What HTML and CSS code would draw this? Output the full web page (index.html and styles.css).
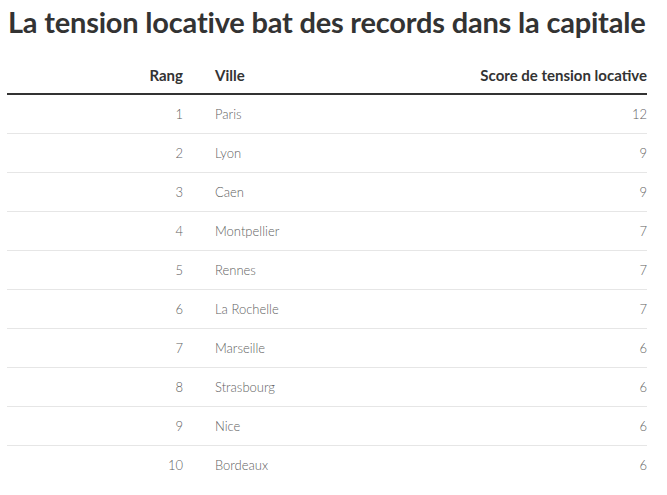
FILE: index.html
```html
<!DOCTYPE html>
<html lang="fr">
<head>
<meta charset="utf-8">
<link rel="stylesheet" href="styles.css">
</head>
<body>
<div class="wrap">
  <h1 class="title">La tension locative bat des records dans la capitale</h1>
  <div class="table">
    <div class="row head">
      <div class="c1">Rang</div><div class="c2">Ville</div><div class="c3">Score de tension locative</div>
    </div>
    <div class="row"><div class="c1">1</div><div class="c2">Paris</div><div class="c3">12</div></div>
    <div class="row"><div class="c1">2</div><div class="c2">Lyon</div><div class="c3">9</div></div>
    <div class="row"><div class="c1">3</div><div class="c2">Caen</div><div class="c3">9</div></div>
    <div class="row"><div class="c1">4</div><div class="c2">Montpellier</div><div class="c3">7</div></div>
    <div class="row"><div class="c1">5</div><div class="c2">Rennes</div><div class="c3">7</div></div>
    <div class="row"><div class="c1">6</div><div class="c2">La Rochelle</div><div class="c3">7</div></div>
    <div class="row"><div class="c1">7</div><div class="c2">Marseille</div><div class="c3">6</div></div>
    <div class="row"><div class="c1">8</div><div class="c2">Strasbourg</div><div class="c3">6</div></div>
    <div class="row"><div class="c1">9</div><div class="c2">Nice</div><div class="c3">6</div></div>
    <div class="row last"><div class="c1">10</div><div class="c2">Bordeaux</div><div class="c3">6</div></div>
  </div>
</div>
</body>
</html>
```
FILE: styles.css
```css
html, body { margin: 0; padding: 0; background: #fff; }
.wrap { padding: 0 20px 0 7px; width: 640px; }
.title {
  margin: 0;
  padding: 4px 0 0 1px;
  height: 40px;
  font-family: "Lato", sans-serif;
  font-weight: 700;
  font-size: 29px;
  line-height: 36px;
  color: #333;
  letter-spacing: -0.2px;
  white-space: nowrap;
}
.table { margin-top: 13px; }
.row {
  display: grid;
  grid-template-columns: 176px 1fr auto;
  column-gap: 32px;
  align-items: center;
  height: 38px;
  border-bottom: 1px solid #e6e6e6;
  font-family: "Lato", sans-serif;
  font-weight: 300;
  font-size: 13px;
  color: #5f5f5f;
}
.row.last { border-bottom: none; }
.row.head {
  height: 36px;
  border-bottom: 2px solid #333;
  font-family: "Lato", sans-serif;
  font-weight: 700;
  font-size: 15px;
  color: #333;
}
.c1 { text-align: right; }
.c3 { text-align: right; }
```
